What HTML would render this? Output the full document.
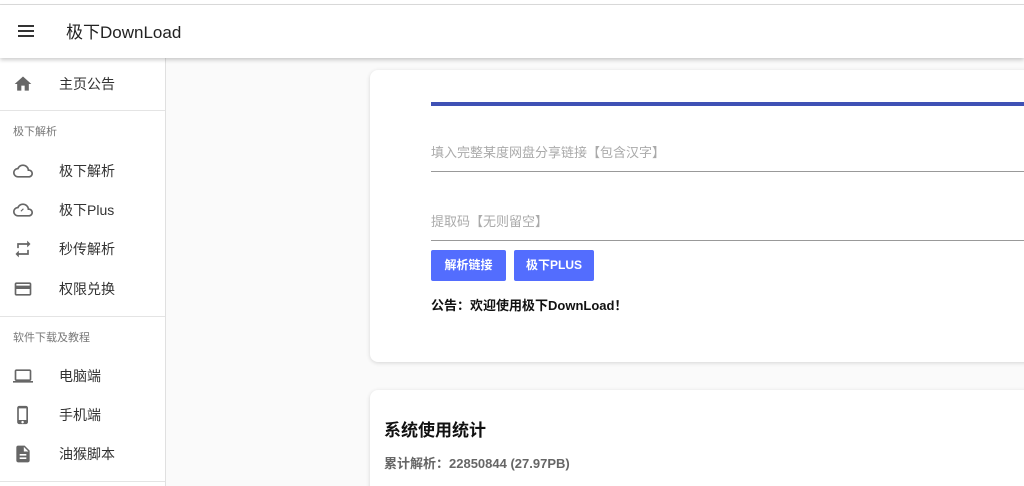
<!DOCTYPE html>
<html><head><meta charset="utf-8"><style>
*{margin:0;padding:0;box-sizing:border-box}
html,body{width:1024px;height:486px;overflow:hidden}
body{background:#fafafa;font-family:"Liberation Sans","Noto Sans CJK SC",sans-serif;position:relative}
.top{position:absolute;left:0;top:0;width:1024px;height:5px;background:#fff;border-bottom:1px solid #ddd}
.hdr{position:absolute;left:0;top:5px;width:1024px;height:53px;background:#fff;box-shadow:0 2px 4px rgba(0,0,0,.2);z-index:2}
.hdr .t{position:absolute;left:66px;top:13px;font-size:17px;color:#222}
.side{position:absolute;left:0;top:58px;width:166px;height:428px;background:#fff;border-right:1px solid #e0e0e0}
.it{position:absolute;left:0;height:30px;width:165px;font-size:14px;color:#333}
.it span{position:absolute;left:59px;top:5px}
.it svg{position:absolute;left:13px;top:5px}
.sub{position:absolute;left:13px;font-size:11px;color:#777}
.hr{position:absolute;left:0;width:165px;height:1px;background:#e4e4e4}
.card{position:absolute;left:370px;background:#fff;border-radius:8px;box-shadow:0 1px 4px rgba(0,0,0,.15);width:700px}
.in{position:absolute;left:61px;width:640px;border-bottom:1px solid #999;font-size:13px;color:#aaa;padding-bottom:10px}
.btn{position:absolute;top:180px;height:31px;background:#536dfe;color:#fff;font-size:12px;font-weight:bold;border-radius:2px;text-align:center;line-height:31px}
</style></head><body>
<div class="top"></div>
<div class="hdr">
<svg style="position:absolute;left:18px;top:20px" width="16" height="12"><rect y="0" width="16" height="2" fill="#333"/><rect y="5" width="16" height="2" fill="#333"/><rect y="10" width="16" height="2" fill="#333"/></svg>
<div class="t">极下DownLoad</div></div>
<div class="side">
<div class="it" style="top:11px"><svg width="20" height="20" viewBox="0 0 24 24"><path d="M10 20v-6h4v6h5v-8h3L12 3 2 12h3v8z" fill="#666"/></svg><span>主页公告</span></div>
<div class="hr" style="top:52px"></div>
<div class="sub" style="top:65px">极下解析</div>
<div class="it" style="top:98px"><svg width="20" height="20" viewBox="0 0 24 24"><path d="M19.35 10.04A7.49 7.49 0 0 0 12 4C9.11 4 6.6 5.64 5.35 8.04A6 6 0 0 0 0 14c0 3.31 2.690 6 6 6h13c2.76 0 5-2.24 5-5 0-2.640-2.05-4.780-4.65-4.96zM19 18H6c-2.21 0-4-1.79-4-4s1.79-4 4-4h.71C7.37 7.69 9.48 6 12 6a5.5 5.5 0 0 1 5.5 5.5v.5H19a3 3 0 0 1 0 6z" fill="#666"/></svg><span>极下解析</span></div>
<div class="it" style="top:137px"><svg width="20" height="20" viewBox="0 0 24 24"><path d="M19.35 10.04A7.49 7.49 0 0 0 12 4C9.11 4 6.6 5.64 5.35 8.04A6 6 0 0 0 0 14c0 3.31 2.69 6 6 6h13c2.76 0 5-2.24 5-5 0-2.64-2.05-4.78-4.65-4.96zM19 18H6c-2.21 0-4-1.79-4-4s1.79-4 4-4h.71C7.37 7.69 9.48 6 12 6a5.5 5.5 0 0 1 5.5 5.5v.5H19a3 3 0 0 1 0 6zM9 13l3-3 1 1-3 3z" fill="#666"/></svg><span>极下Plus</span></div>
<div class="it" style="top:176px"><svg width="20" height="20" viewBox="0 0 24 24"><path d="M7 7h10v3l4-4-4-4v3H5v6h2zm10 10H7v-3l-4 4 4 4v-3h12v-6h-2z" fill="#666"/></svg><span>秒传解析</span></div>
<div class="it" style="top:216px"><svg width="20" height="20" viewBox="0 0 24 24"><path d="M20 4H4c-1.1 0-2 .9-2 2v12c0 1.1.9 2 2 2h16c1.1 0 2-.9 2-2V6c0-1.1-.9-2-2-2zm0 14H4v-6h16zm0-10H4V6h16z" fill="#666"/></svg><span>权限兑换</span></div>
<div class="hr" style="top:258px"></div>
<div class="sub" style="top:271px">软件下载及教程</div>
<div class="it" style="top:303px"><svg width="20" height="20" viewBox="0 0 24 24"><path d="M20 18c1.1 0 2-.9 2-2V6c0-1.1-.9-2-2-2H4c-1.1 0-2 .9-2 2v10c0 1.1.9 2 2 2H0v2h24v-2zM4 6h16v10H4z" fill="#666"/></svg><span>电脑端</span></div>
<div class="it" style="top:342px"><svg width="20" height="20" viewBox="0 0 24 24"><path d="M15.5 1h-8A2.5 2.5 0 0 0 5 3.5v17A2.5 2.5 0 0 0 7.5 23h8a2.5 2.5 0 0 0 2.5-2.5v-17A2.5 2.5 0 0 0 15.5 1zm-4 21c-.83 0-1.5-.67-1.5-1.5s.67-1.5 1.5-1.5 1.5.67 1.5 1.5-.67 1.5-1.5 1.5zm4.5-4H7V4h9z" fill="#666"/></svg><span>手机端</span></div>
<div class="it" style="top:381px"><svg width="20" height="20" viewBox="0 0 24 24"><path d="M14 2H6c-1.1 0-2 .9-2 2v16c0 1.1.9 2 2 2h12c1.1 0 2-.9 2-2V8zm2 16H8v-2h8zm0-4H8v-2h8zm-3-5V3.5L18.5 9z" fill="#666"/></svg><span>油猴脚本</span></div>
<div class="hr" style="top:423px"></div>
</div>
<div class="card" style="top:70px;height:292px">
<div style="position:absolute;left:61px;top:32px;width:640px;height:4px;background:#3f51b5"></div>
<div class="in" style="top:72px">填入完整某度网盘分享链接【包含汉字】</div>
<div class="in" style="top:141px">提取码【无则留空】</div>
<div class="btn" style="left:61px;width:75px">解析链接</div>
<div class="btn" style="left:144px;width:80px">极下PLUS</div>
<div style="position:absolute;left:61px;top:225px;font-size:13px;font-weight:bold;color:#111">公告：欢迎使用极下DownLoad！</div>
</div>
<div class="card" style="top:390px;height:120px">
<div style="position:absolute;left:14px;top:26px;font-size:17px;font-weight:bold;color:#111">系统使用统计</div>
<div style="position:absolute;left:14px;top:63px;font-size:13px;font-weight:bold;color:#666">累计解析：22850844 (27.97PB)</div>
</div>
</body></html>
